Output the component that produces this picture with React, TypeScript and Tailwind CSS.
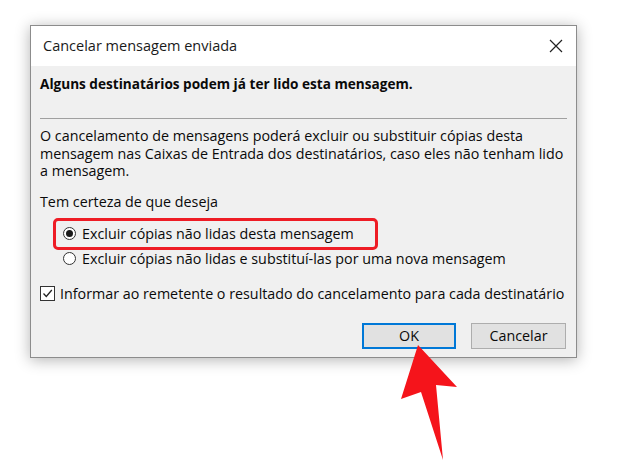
import React from 'react';

const font = { fontFamily: '"Segoe UI", "Open Sans", "Liberation Sans", sans-serif' };

function Radio({ checked }: { checked?: boolean }) {
  return (
    <span className="w-[13px] h-[13px] rounded-full border border-[#333] bg-white flex items-center justify-center shrink-0">
      {checked && <span className="w-[7px] h-[7px] rounded-full bg-[#1a1a1a]" />}
    </span>
  );
}

function Arrow() {
  return (
    <svg className="absolute left-0 top-0 pointer-events-none" width="620" height="467" viewBox="0 0 620 467">
      <polygon
        points="418,345 457,387 436,385 443,460 421,392 401,399"
        fill="#f5141b"
      />
    </svg>
  );
}

export default function App() {
  return (
    <div className="relative w-[620px] h-[467px] bg-white overflow-hidden" style={font}>
      <div className="absolute left-[30px] top-[25px] w-[547px] h-[333px] bg-[#f0f0f0] border border-[#8c8c8c] shadow-[0_2px_14px_rgba(0,0,0,0.3)] flex flex-col text-[14.3px] text-[#0a0a0a] whitespace-nowrap">
        {/* title bar */}
        <div className="h-[40px] bg-white flex items-center justify-between pl-[12px] pr-[13px] shrink-0">
          <span className="text-[14.5px] text-[#1a1a1a]">Cancelar mensagem enviada</span>
          <svg width="14" height="14" viewBox="0 0 14 14">
            <path d="M1 1 L13 13 M13 1 L1 13" stroke="#222" strokeWidth="1.2" />
          </svg>
        </div>

        <div className="flex flex-col pl-[9px] pr-[9px]">
          <div className="font-bold text-[13.6px] mt-[9px] leading-[18px]">Alguns destinatários podem já ter lido esta mensagem.</div>
          <div className="h-px bg-[#a0a0a0] mt-[25px]" />
          <p className="mt-[8px] leading-[17.5px]">
            O cancelamento de mensagens poderá excluir ou substituir cópias desta
            <br />
            mensagem nas Caixas de Entrada dos destinatários, caso eles não tenham lido
            <br />
            a mensagem.
          </p>
          <div className="mt-[13px] leading-[18px]">Tem certeza de que deseja</div>

          <div className="mt-[7px] ml-[13px] w-[325px] h-[32px] border-[3px] border-[#ee1c25] rounded-[5px] flex items-center pl-[7px] gap-[6px]">
            <Radio checked />
            <span>Excluir cópias não lidas desta mensagem</span>
          </div>
          <div className="ml-[23px] mt-[0px] h-[18px] flex items-center gap-[6px]">
            <Radio />
            <span>Excluir cópias não lidas e substituí-las por uma nova mensagem</span>
          </div>

          <div className="mt-[17px] h-[18px] flex items-center gap-[5px]">
            <span className="w-[15px] h-[15px] border border-[#333] bg-white flex items-center justify-center shrink-0">
              <svg width="11" height="11" viewBox="0 0 11 11">
                <path d="M1.5 5.5 L4.3 8.5 L9.8 2" fill="none" stroke="#222" strokeWidth="1.3" />
              </svg>
            </span>
            <span>Informar ao remetente o resultado do cancelamento para cada destinatário</span>
          </div>

          <div className="mt-[20px] flex justify-end gap-[15px] pr-[1px]">
            <button className="w-[94px] h-[26px] bg-[#e1e1e1] border-2 border-[#0078d7] flex items-center justify-center">OK</button>
            <button className="w-[95px] h-[26px] bg-[#e1e1e1] border border-[#adadad] flex items-center justify-center">Cancelar</button>
          </div>
        </div>
      </div>
      <Arrow />
    </div>
  );
}
